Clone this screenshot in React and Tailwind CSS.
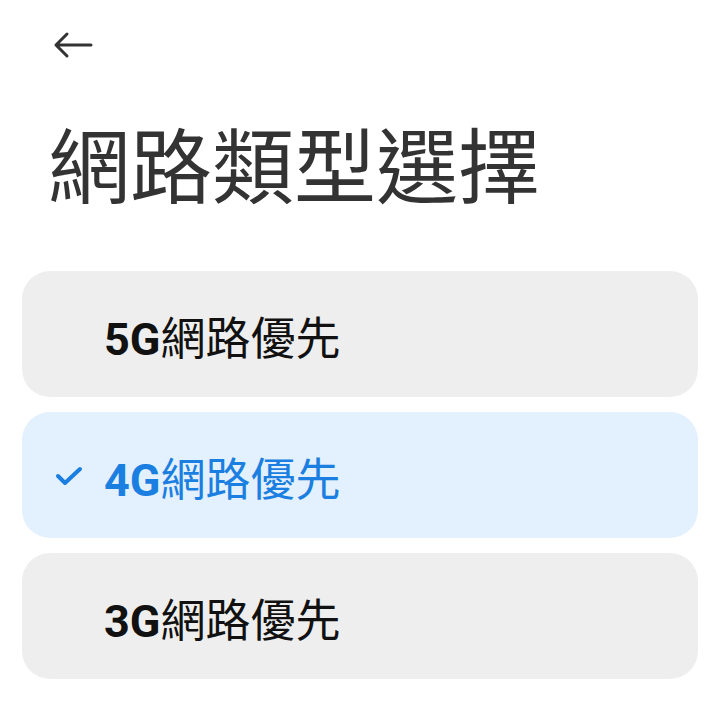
import { useState } from "react";

const options = [
  { id: "5g", prefix: "5G", label: "網路優先" },
  { id: "4g", prefix: "4G", label: "網路優先" },
  { id: "3g", prefix: "3G", label: "網路優先" },
];

const NetworkTypeSelect = () => {
  const [selected, setSelected] = useState("4g");

  return (
    <div
      className="w-[720px] h-[713px] bg-white overflow-hidden"
      style={{ fontFamily: '"Roboto", "Noto Sans CJK TC", sans-serif' }}
    >
      <div className="pl-[52px] pt-[30px] h-[30px] box-content">
        <svg width="42" height="30" viewBox="0 0 42 30" fill="none">
          <path
            d="M39 15H4M15 4L4 15l11 11"
            stroke="#333333"
            strokeWidth="3"
            strokeLinecap="round"
            strokeLinejoin="round"
          />
        </svg>
      </div>

      <h1 className="pl-[48px] mt-[64px] text-[82px] leading-[90px] text-[#333333] font-normal">
        網路類型選擇
      </h1>

      <div className="mt-[57px] px-[22px] flex flex-col gap-[15px]">
        {options.map((opt) => {
          const active = opt.id === selected;
          return (
            <button
              key={opt.id}
              onClick={() => setSelected(opt.id)}
              className={`h-[126px] rounded-[28px] flex items-center text-left ${
                active ? "bg-[#e3f0fd]" : "bg-[#eeeeee]"
              }`}
            >
              <span className="w-[82px] flex justify-end pr-[21px] pt-[2px]">
                {active && (
                  <svg width="28" height="22" viewBox="0 0 28 22" fill="none">
                    <path
                      d="M3 11l7 7L25 4"
                      stroke="#1a7fe0"
                      strokeWidth="4"
                      strokeLinecap="round"
                      strokeLinejoin="round"
                    />
                  </svg>
                )}
              </span>
              <span
                className={`text-[45px] leading-none pt-[10px] ${
                  active ? "text-[#1a7fe0]" : "text-[#111111]"
                }`}
              >
                <span className="font-bold">{opt.prefix}</span>
                <span className="font-normal">{opt.label}</span>
              </span>
            </button>
          );
        })}
      </div>
    </div>
  );
};

export default function App() {
  return <NetworkTypeSelect />;
}
